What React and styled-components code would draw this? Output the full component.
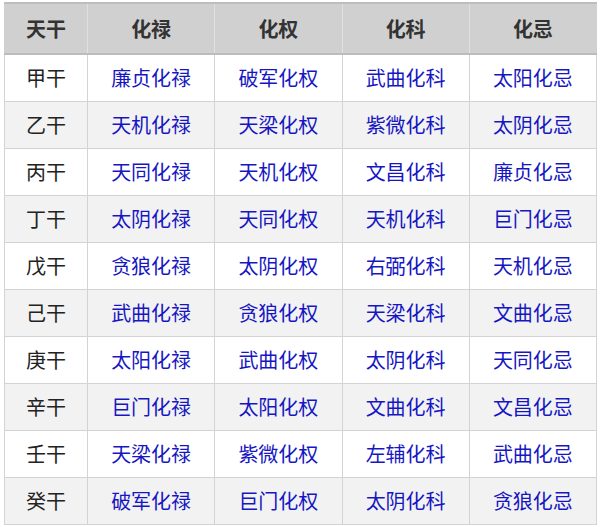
import React from "react";
import styled, { createGlobalStyle } from "styled-components";

const Global = createGlobalStyle`
  html, body { margin: 0; padding: 0; background: #ffffff; }
  body { font-family: "Noto Sans CJK SC", "Noto Sans", sans-serif; }
`;

const Wrap = styled.div`
  padding: 2px 6px 0 4px;
`;

const Table = styled.table`
  border-collapse: collapse;
  width: 593px;
  table-layout: fixed;
  border-top: 2px solid #bdbdbd;
`;

const Th = styled.th`
  height: 49px;
  padding: 0;
  background: #d0d0d0;
  color: #333333;
  font-size: 20px;
  font-weight: 700;
  text-align: center;
  border-left: 1px solid #e0e0e0;
  border-bottom: 2px solid #bcbcbc;
  width: ${(p) => (p.$narrow ? "82px" : "auto")};
  &:first-child { border-left: 1px solid #d0d0d0; }
  &:last-child { border-right: 1px solid #d0d0d0; }
`;

const Tr = styled.tr`
  background: ${(p) => (p.$alt ? "#f2f2f2" : "#ffffff")};
`;

const Td = styled.td`
  height: 46px;
  padding: 0;
  text-align: center;
  font-size: 20px;
  line-height: 1.2;
  color: ${(p) => (p.$stem ? "#222222" : "#1616c2")};
  border: 1px solid #d3d3d3;
`;

const cols = ["天干", "化禄", "化权", "化科", "化忌"];
const rows = [
  ["甲干", "廉贞化禄", "破军化权", "武曲化科", "太阳化忌"],
  ["乙干", "天机化禄", "天梁化权", "紫微化科", "太阴化忌"],
  ["丙干", "天同化禄", "天机化权", "文昌化科", "廉贞化忌"],
  ["丁干", "太阴化禄", "天同化权", "天机化科", "巨门化忌"],
  ["戊干", "贪狼化禄", "太阴化权", "右弼化科", "天机化忌"],
  ["己干", "武曲化禄", "贪狼化权", "天梁化科", "文曲化忌"],
  ["庚干", "太阳化禄", "武曲化权", "太阴化科", "天同化忌"],
  ["辛干", "巨门化禄", "太阳化权", "文曲化科", "文昌化忌"],
  ["壬干", "天梁化禄", "紫微化权", "左辅化科", "武曲化忌"],
  ["癸干", "破军化禄", "巨门化权", "太阴化科", "贪狼化忌"],
];

export default function App() {
  return (
    <Wrap>
      <Global />
      <Table>
        <thead>
          <tr>
            {cols.map((c, i) => (
              <Th key={c} $narrow={i === 0}>{c}</Th>
            ))}
          </tr>
        </thead>
        <tbody>
          {rows.map((r, i) => (
            <Tr key={r[0]} $alt={i % 2 === 1}>
              {r.map((c, j) => (
                <Td key={j} $stem={j === 0}>{c}</Td>
              ))}
            </Tr>
          ))}
        </tbody>
      </Table>
    </Wrap>
  );
}
